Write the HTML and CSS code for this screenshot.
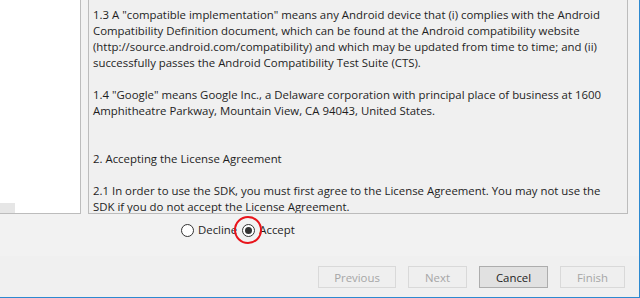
FILE: index.html
```html
<!DOCTYPE html>
<html lang="en">
<head>
    <meta charset="UTF-8">
    <title>License Agreement</title>
    <link rel="stylesheet" href="styles.css">
</head>
<body>
    <div class="window">
        <div class="main">
            <div class="side">
                <div class="side-scroll"></div>
            </div>
            <div class="license">
                <p>1.3 A "compatible implementation" means any Android device that (i) complies with the Android<br>Compatibility Definition document, which can be found at the Android compatibility website<br>(http://source.android.com/compatibility) and which may be updated from time to time; and (ii)<br>successfully passes the Android Compatibility Test Suite (CTS).</p>
                <p>1.4 "Google" means Google Inc., a Delaware corporation with principal place of business at 1600<br>Amphitheatre Parkway, Mountain View, CA 94043, United States.</p>
                <p class="spaced">2. Accepting the License Agreement</p>
                <p>2.1 In order to use the SDK, you must first agree to the License Agreement. You may not use the<br>SDK if you do not accept the License Agreement.</p>
            </div>
        </div>

        <div class="choice">
            <label class="radio">
                <span class="dot"></span>
                <span>Decline</span>
            </label>
            <label class="radio checked">
                <span class="dot"></span>
                <span>Accept</span>
                <span class="marker"></span>
            </label>
        </div>

        <div class="buttons">
            <button class="btn btn-prev" disabled>Previous</button>
            <button class="btn btn-next" disabled>Next</button>
            <button class="btn btn-cancel">Cancel</button>
            <button class="btn btn-finish" disabled>Finish</button>
        </div>
    </div>
</body>
</html>
```

FILE: styles.css
```css
* {
    margin: 0;
    padding: 0;
    box-sizing: border-box;
}

:root {
    --panel: #f2f2f2;
    --line: #bcbcbc;
    --text: #1e1e1e;
    --accent: #2d89d0;
}

body {
    width: 640px;
    height: 298px;
    overflow: hidden;
    background: var(--panel);
    font-family: "Open Sans", sans-serif;
    font-size: 11.4px;
    color: var(--text);
}

.window {
    width: 640px;
    height: 298px;
    display: flex;
    flex-direction: column;
    border-right: 1px solid var(--accent);
    border-bottom: 1px solid var(--accent);
}

.main {
    height: 214px;
    display: flex;
}

.side {
    width: 81px;
    background: #ffffff;
    border-right: 1px solid var(--line);
    border-bottom: 1px solid var(--line);
    display: flex;
    align-items: flex-end;
}

.side-scroll {
    width: 15px;
    height: 10px;
    background: #e6e6e6;
}

.license {
    width: 540px;
    margin-left: 7px;
    padding: 7px 0 0 4px;
    border: 1px solid var(--line);
    border-top: none;
    background: #f0f0f0;
    line-height: 16px;
    white-space: nowrap;
    overflow: hidden;
}

.license p {
    margin-bottom: 16px;
}

/* two blank lines before the section heading */
.license p.spaced {
    margin-top: 32px;
}

.choice {
    height: 42px;
    display: flex;
    align-items: flex-start;
    padding: 8px 0 0 181px;
    gap: 5px;
}

.radio {
    position: relative;
    display: flex;
    align-items: center;
    gap: 4px;
    line-height: 16px;
}

.dot {
    width: 13px;
    height: 13px;
    border: 1px solid #333333;
    border-radius: 50%;
    background: #ffffff;
    display: grid;
    place-items: center;
}

.checked .dot::after {
    content: "";
    width: 7px;
    height: 7px;
    border-radius: 50%;
    background: #333333;
}

.marker {
    position: absolute;
    left: -8px;
    top: -6px;
    width: 28px;
    height: 28px;
    border: 2px solid #e8141b;
    border-radius: 50%;
}

.buttons {
    flex: 1;
    display: flex;
    align-items: flex-start;
    padding: 10px 0 0 318px;
    gap: 12px;
    background: #f0f0f0;
}

.btn {
    height: 22px;
    font-family: inherit;
    font-size: 11.4px;
    color: var(--text);
    background: #e1e1e1;
    border: 1px solid #adadad;
}

.btn:disabled {
    color: #a6a6a6;
    background: #efefef;
    border-color: #d9d9d9;
}

.btn-prev { width: 78px; }
.btn-next { width: 59px; }
.btn-cancel { width: 69px; }
.btn-finish { width: 65px; }
```
